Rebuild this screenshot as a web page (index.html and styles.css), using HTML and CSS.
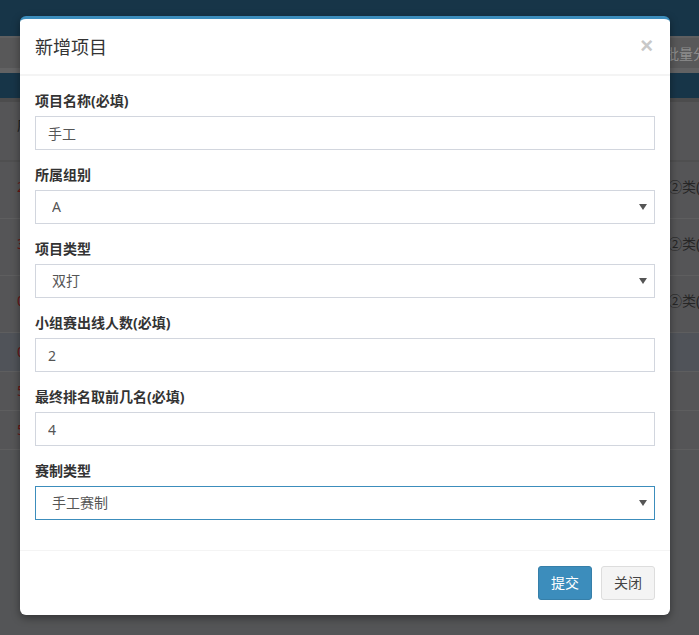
FILE: index.html
```html
<!DOCTYPE html>
<html lang="zh-CN">
<head>
<meta charset="utf-8">
<title>新增项目</title>
<link rel="stylesheet" href="styles.css">
</head>
<body>
<div class="page">
  <div class="navbar"></div>
  <div class="toolbar"><span class="tool-text">批量分组</span></div>
  <div class="tabs"></div>
  <div class="table">
    <div class="row head"><span class="c-left dark">序号</span><span class="c-right"></span></div>
    <div class="row"><span class="c-left red">2</span><span class="c-right">②类(备</span></div>
    <div class="row"><span class="c-left red">3</span><span class="c-right">②类(备</span></div>
    <div class="row"><span class="c-left red">0</span><span class="c-right">②类(备</span></div>
    <div class="row short hl"><span class="c-left red">0</span><span class="c-right"></span></div>
    <div class="row short"><span class="c-left red">5</span><span class="c-right"></span></div>
    <div class="row short last"><span class="c-left red">5</span><span class="c-right"></span></div>
  </div>
</div>

<div class="modal">
  <div class="modal-header">
    <h4 class="modal-title">新增项目</h4>
    <button class="close" type="button">×</button>
  </div>
  <div class="modal-body">
    <div class="form-group">
      <label class="label">项目名称(必填)</label>
      <input class="control" type="text" value="手工">
    </div>
    <div class="form-group">
      <label class="label">所属组别</label>
      <div class="select-wrap">
        <select class="control select"><option>A</option></select>
        <svg class="caret" width="8" height="6" viewBox="0 0 8 6"><path d="M0 0H8L4 6Z" fill="#555"/></svg>
      </div>
    </div>
    <div class="form-group">
      <label class="label">项目类型</label>
      <div class="select-wrap">
        <select class="control select"><option>双打</option></select>
        <svg class="caret" width="8" height="6" viewBox="0 0 8 6"><path d="M0 0H8L4 6Z" fill="#555"/></svg>
      </div>
    </div>
    <div class="form-group">
      <label class="label">小组赛出线人数(必填)</label>
      <input class="control" type="text" value="2">
    </div>
    <div class="form-group">
      <label class="label">最终排名取前几名(必填)</label>
      <input class="control" type="text" value="4">
    </div>
    <div class="form-group">
      <label class="label">赛制类型</label>
      <div class="select-wrap">
        <select class="control select focus"><option>手工赛制</option></select>
        <svg class="caret" width="8" height="6" viewBox="0 0 8 6"><path d="M0 0H8L4 6Z" fill="#555"/></svg>
      </div>
    </div>
  </div>
  <div class="modal-footer">
    <button class="btn btn-primary" type="button">提交</button>
    <button class="btn btn-default" type="button">关闭</button>
  </div>
</div>
</body>
</html>
```

FILE: styles.css
```css
* { box-sizing: border-box; }
html, body { margin: 0; padding: 0; }
body {
  width: 699px;
  height: 635px;
  overflow: hidden;
  background: #545557;
  font-family: "Noto Sans", "Noto Sans CJK SC", sans-serif;
  font-size: 14px;
  color: #333;
  position: relative;
}

/* background page (seen through backdrop) */
.page { display: flex; flex-direction: column; }
.navbar { height: 36px; background: #173548; }
.toolbar {
  height: 37px;
  background: #585859;
  border-top: 2px solid #5f5f60;
  border-bottom: 5px solid #626263;
  display: flex;
  align-items: center;
  justify-content: flex-end;
  overflow: hidden;
}
.tool-text {
  color: #8e8e8e;
  font-size: 14px;
  line-height: 20px;
  white-space: nowrap;
  width: 34px;
  overflow: hidden;
  margin-top: 2px;
}
.tabs { height: 29px; background: #173548; border-bottom: 4px solid #4c4c4d; }
.table { display: flex; flex-direction: column; }
.row {
  display: flex;
  align-items: flex-start;
  height: 57px;
  padding-top: 15px;
  background: #555557;
  border-bottom: 1px solid #5e5e5f;
  line-height: 20px;
}
.row.head { height: 60px; padding-top: 13px; border-bottom: 2px solid #4f4f50; }
.row.short { height: 39px; padding-top: 9px; }
.row.last { border-bottom: 1px solid #5e5e5f; }
.row.hl { background: #505359; }
.c-left { padding-left: 17px; width: 60px; white-space: nowrap; }
.c-right {
  margin-left: auto;
  width: 31px;
  overflow: hidden;
  white-space: nowrap;
  color: #262626;
}
.dark { color: #1e1e1e; }
.red { color: #6e1414; }

/* modal */
.modal {
  position: absolute;
  left: 20px;
  top: 16px;
  width: 650px;
  background: #fff;
  border-top: 3px solid #3c8dbc;
  border-radius: 6px;
  box-shadow: 0 3px 9px rgba(0, 0, 0, 0.4);
  font-family: "Noto Sans", "Noto Sans CJK SC", sans-serif;
}
.modal-header {
  display: flex;
  align-items: center;
  justify-content: space-between;
  padding: 15px 15px 14px 15px;
  border-bottom: 2px solid #f4f4f4;
}
.modal-title {
  margin: 0;
  font-size: 18px;
  font-weight: normal;
  line-height: 26px;
  color: #333;
}
.close {
  border: 0;
  background: none;
  padding: 0;
  margin: -2px 2px 0 0;
  font-family: "Liberation Sans", "DejaVu Sans", sans-serif;
  font-size: 22px;
  font-weight: bold;
  line-height: 20px;
  color: #c8c8c8;
}
.modal-body { padding: 15px; }
.form-group { margin-bottom: 15px; display: flex; flex-direction: column; }
.label {
  display: block;
  font-weight: bold;
  font-size: 14px;
  line-height: 20px;
  margin-bottom: 5px;
  color: #333;
}
.control {
  display: block;
  width: 100%;
  height: 34px;
  padding: 6px 12px;
  border: 1px solid #d2d6de;
  border-radius: 0;
  background: #fff;
  font-family: "Noto Sans", "Noto Sans CJK SC", sans-serif;
  font-size: 14px;
  line-height: 20px;
  color: #555;
  outline: none;
}
.select-wrap { position: relative; }
.select {
  -webkit-appearance: none;
  appearance: none;
  padding-left: 16px;
}
.select.focus { border-color: #3c8dbc; }
.caret {
  position: absolute;
  right: 8px;
  top: 14px;
  pointer-events: none;
}
.modal-footer {
  display: flex;
  justify-content: flex-end;
  gap: 9px;
  padding: 15px;
  border-top: 1px solid #f4f4f4;
}
.btn {
  height: 34px;
  padding: 6px 12px;
  font-family: "Noto Sans", "Noto Sans CJK SC", sans-serif;
  font-size: 14px;
  line-height: 20px;
  border-radius: 3px;
  border: 1px solid transparent;
}
.btn-primary { background: #3c8dbc; border-color: #367fa9; color: #fff; }
.btn-default { background: #f4f4f4; border-color: #ddd; color: #444; }
```
